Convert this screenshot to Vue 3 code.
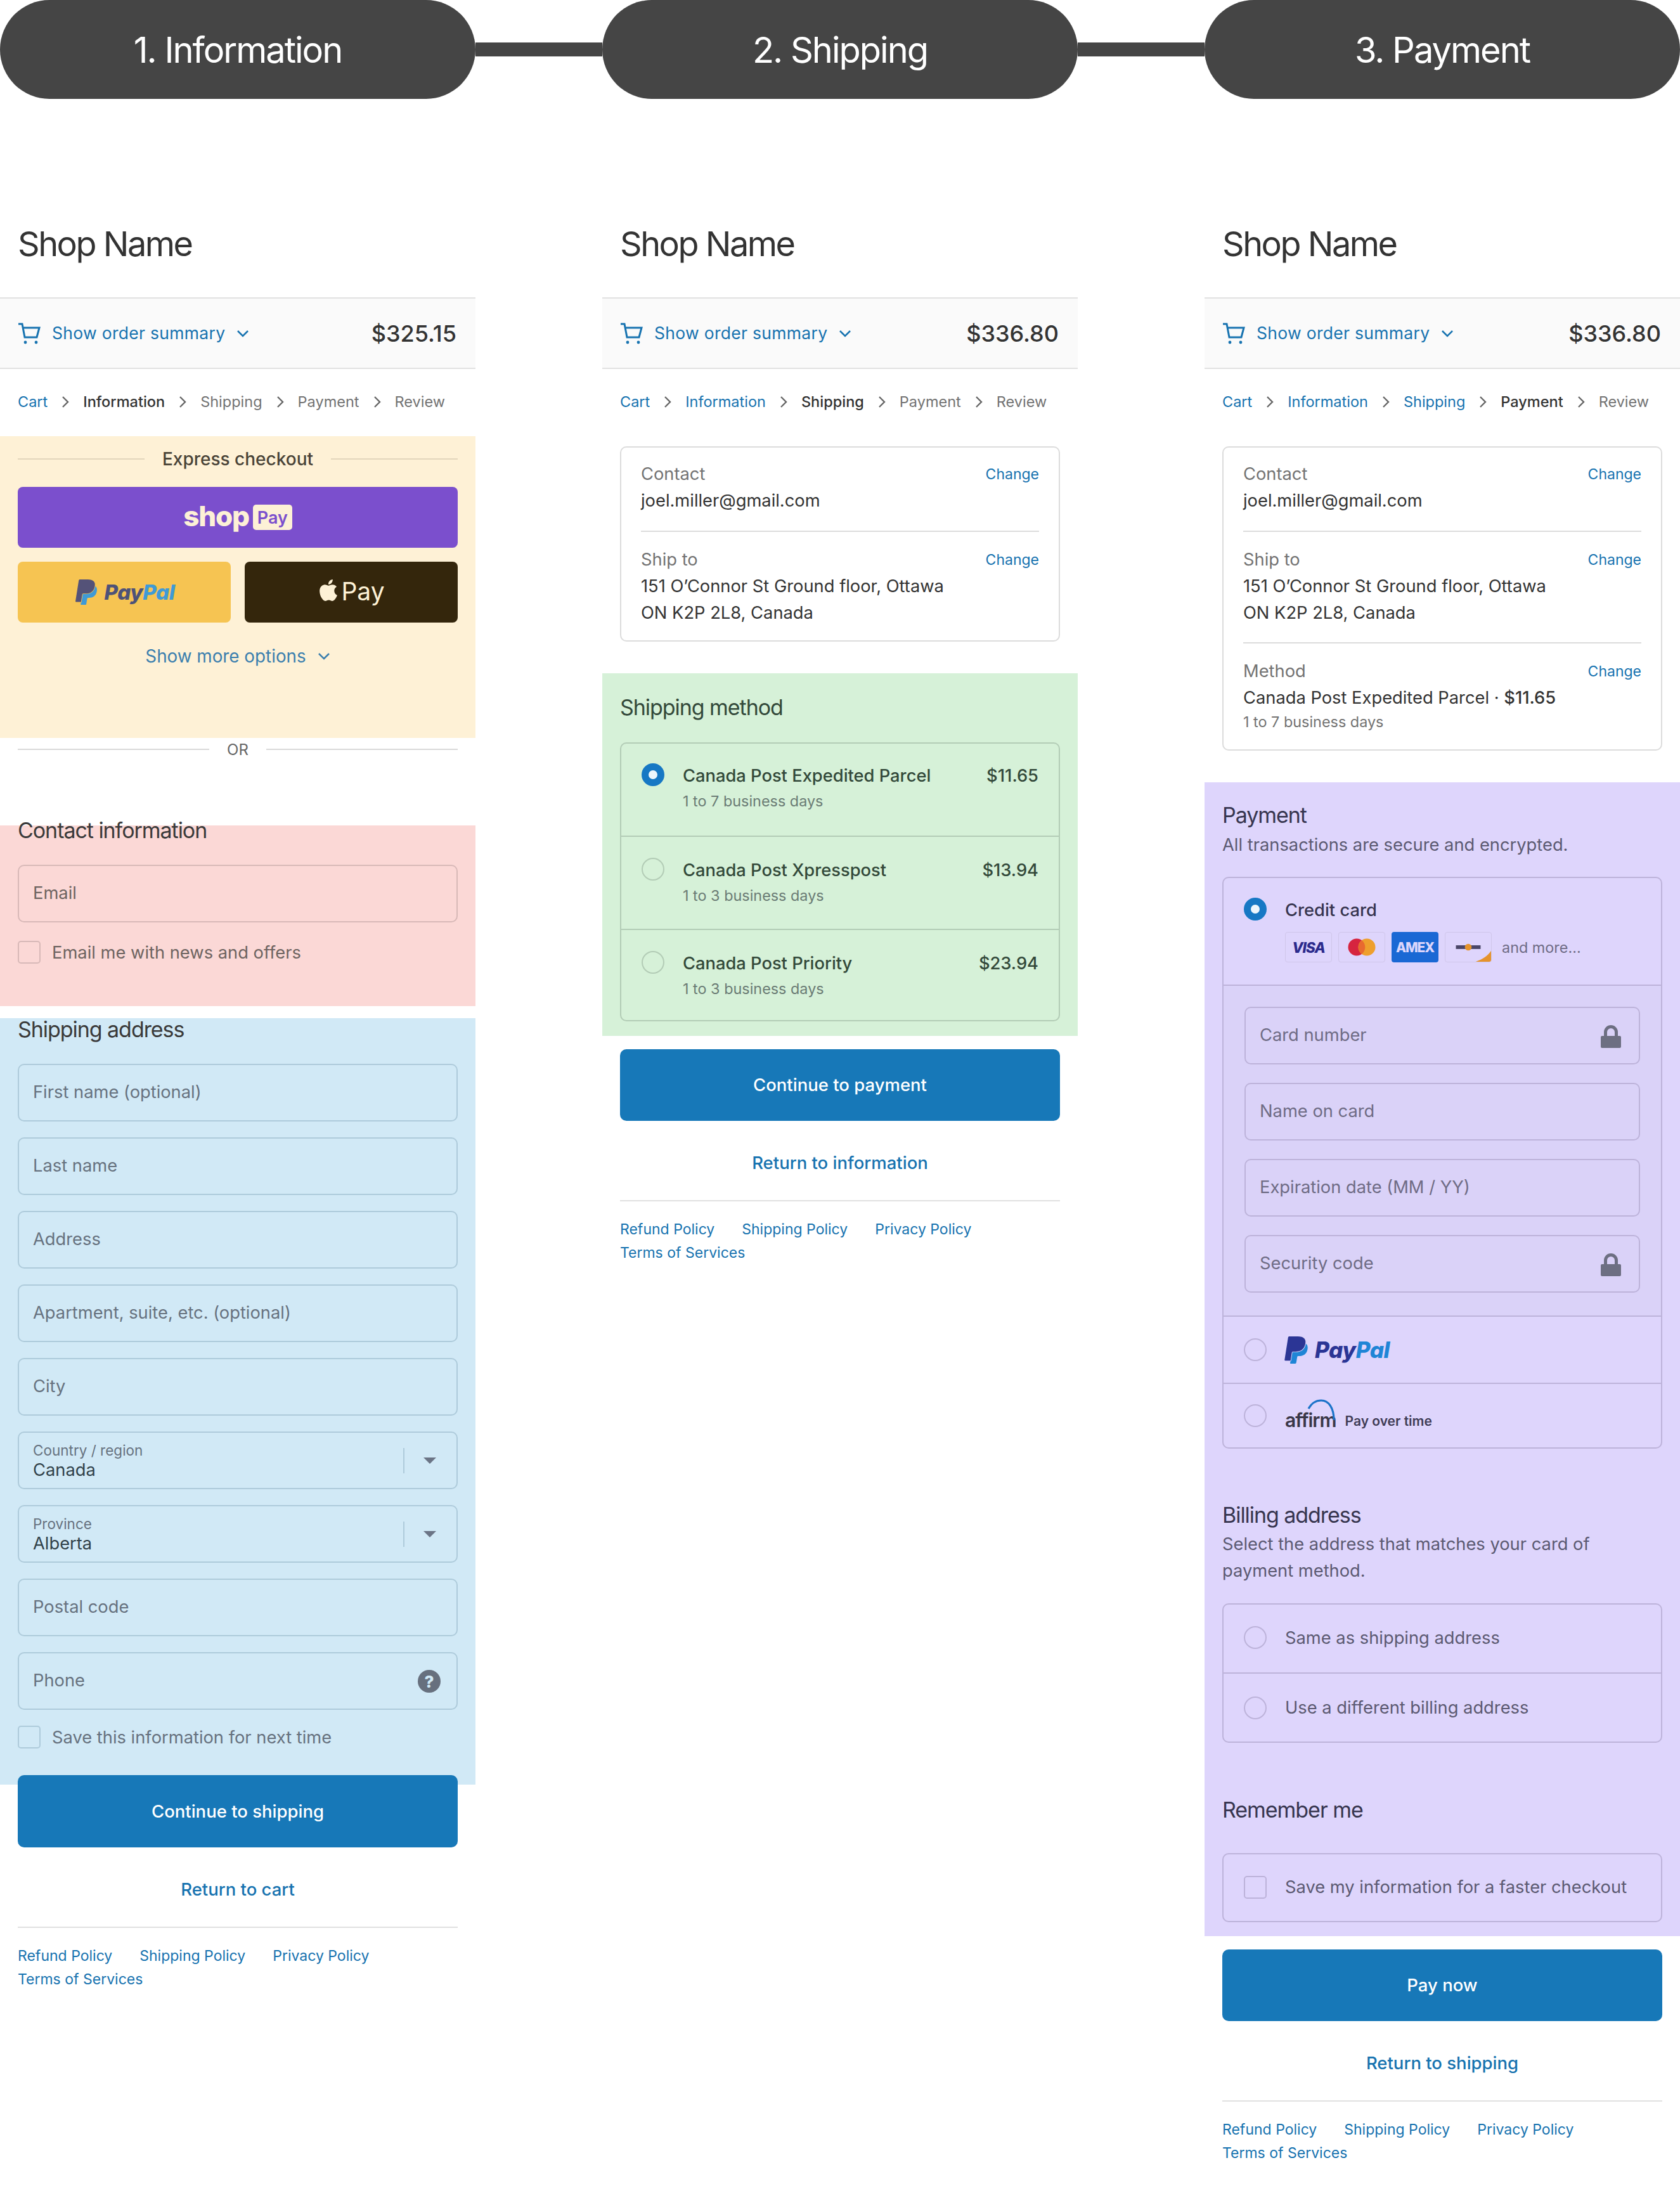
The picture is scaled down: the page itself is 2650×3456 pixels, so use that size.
<template>
  <div class="board">
    <div class="steps">
      <div class="pill">1. Information</div>
      <div class="link"></div>
      <div class="pill">2. Shipping</div>
      <div class="link"></div>
      <div class="pill">3. Payment</div>
    </div>

    <div class="columns">
      <!-- information -->
      <section class="col">
        <h1 class="shop">Shop Name</h1>
        <div class="summary">
          <svg class="cart" viewBox="0 0 36 34" fill="none" stroke="#1773b0" stroke-width="3">
            <path d="M1 2h6l4 21h19l4-15H8" />
            <circle cx="12" cy="31" r="2.4" fill="#1773b0" stroke="none" />
            <circle cx="29" cy="31" r="2.4" fill="#1773b0" stroke="none" />
          </svg>
          <span class="summary-text">Show order summary</span>
          <svg class="chev-down" viewBox="0 0 20 12" fill="none" stroke="#1773b0" stroke-width="2.6"><path d="M2 2l8 8 8-8" /></svg>
          <span class="total">$325.15</span>
        </div>
        <nav class="crumbs">
          <template v-for="(c, i) in crumbs" :key="c">
            <svg v-if="i" class="chev" viewBox="0 0 12 20" fill="none" stroke="#666" stroke-width="2.4"><path d="M2 2l8 8-8 8" /></svg>
            <span :class="crumbClass(i, 1)">{{ c }}</span>
          </template>
        </nav>

        <div class="panel yellow">
          <div class="divider express"><i></i><span>Express checkout</span><i></i></div>
          <div class="btn-shop"><span class="shop-word">shop</span><span class="shop-pay">Pay</span></div>
          <div class="pay-row">
            <div class="btn-paypal">
              <svg class="pp-mark small" viewBox="0 0 24 24">
                <path class="pp-light" d="M21.222 6.917a3.35 3.35 0 0 0-.607-.541c-.013.076-.026.175-.041.254-.93 4.778-4.005 7.201-9.138 7.201h-2.19a.563.563 0 0 0-.556.479l-1.187 7.527h-.506l-.24 1.516a.56.56 0 0 0 .554.647h3.882c.46 0 .85-.334.922-.788.06-.26.76-4.852.816-5.09a.932.932 0 0 1 .923-.788h.58c3.76 0 6.705-1.528 7.565-5.946.36-1.847.174-3.388-.777-4.471z" />
                <path class="pp-dark" d="M7.076 21.337H2.47a.641.641 0 0 1-.633-.74L4.944.901C5.026.382 5.474 0 5.998 0h7.46c2.57 0 4.578.543 5.69 1.81 1.01 1.15 1.304 2.42 1.012 4.287-.023.143-.047.288-.077.437-.983 5.05-4.349 6.797-8.647 6.797h-2.19c-.524 0-.968.382-1.05.9l-1.12 7.106z" />
              </svg>
              <span class="pp-word"><b>Pay</b><em>Pal</em></span>
            </div>
            <div class="btn-apple">
              <svg class="apple" viewBox="0 0 24 24" fill="#fdf1d6"><path d="M12.152 6.896c-.948 0-2.415-1.078-3.96-1.04-2.04.027-3.91 1.183-4.961 3.014-2.117 3.675-.546 9.103 1.519 12.09 1.013 1.454 2.208 3.09 3.792 3.039 1.52-.065 2.09-.987 3.935-.987 1.831 0 2.35.987 3.96.948 1.637-.026 2.676-1.48 3.676-2.948 1.156-1.688 1.636-3.325 1.662-3.415-.039-.013-3.182-1.221-3.22-4.857-.026-3.04 2.48-4.494 2.597-4.559-1.429-2.09-3.623-2.324-4.39-2.376-2-.156-3.675 1.09-4.61 1.09zM15.53 3.83c.843-1.012 1.4-2.427 1.245-3.83-1.207.052-2.662.805-3.532 1.818-.78.896-1.454 2.338-1.273 3.714 1.338.104 2.715-.688 3.559-1.701" /></svg>
              <span class="apple-pay">Pay</span>
            </div>
          </div>
          <div class="more">
            Show more options
            <svg class="chev-down" viewBox="0 0 20 12" fill="none" stroke="#3b7fae" stroke-width="2.6"><path d="M2 2l8 8 8-8" /></svg>
          </div>
        </div>

        <div class="divider or"><i></i><span>OR</span><i></i></div>

        <div class="panel pink">
          <h2 class="title contact-title">Contact information</h2>
          <div class="field"><span class="ph">Email</span></div>
          <label class="check news"><span class="box"></span>Email me with news and offers</label>
        </div>

        <div class="panel blue">
          <h2 class="title addr-title">Shipping address</h2>
          <div class="fields">
            <div v-for="f in addressFields" :key="f.label" class="field" :class="{ select: f.value }">
              <template v-if="f.value">
                <div class="sel-text"><small>{{ f.label }}</small><span>{{ f.value }}</span></div>
                <i class="sel-line"></i>
                <svg class="sel-arrow" viewBox="0 0 20 10"><path d="M0 0h20l-10 10z" fill="#6b7485" /></svg>
              </template>
              <template v-else>
                <span class="ph">{{ f.label }}</span>
                <span v-if="f.help" class="help">?</span>
              </template>
            </div>
          </div>
          <label class="check save"><span class="box"></span>Save this information for next time</label>
        </div>

        <div class="cta over">Continue to shipping</div>
        <div class="back">Return to cart</div>
        <div class="foot"><a v-for="l in policies" :key="l">{{ l }}</a></div>
      </section>

      <!-- shipping -->
      <section class="col">
        <h1 class="shop">Shop Name</h1>
        <div class="summary">
          <svg class="cart" viewBox="0 0 36 34" fill="none" stroke="#1773b0" stroke-width="3">
            <path d="M1 2h6l4 21h19l4-15H8" />
            <circle cx="12" cy="31" r="2.4" fill="#1773b0" stroke="none" />
            <circle cx="29" cy="31" r="2.4" fill="#1773b0" stroke="none" />
          </svg>
          <span class="summary-text">Show order summary</span>
          <svg class="chev-down" viewBox="0 0 20 12" fill="none" stroke="#1773b0" stroke-width="2.6"><path d="M2 2l8 8 8-8" /></svg>
          <span class="total">$336.80</span>
        </div>
        <nav class="crumbs">
          <template v-for="(c, i) in crumbs" :key="c">
            <svg v-if="i" class="chev" viewBox="0 0 12 20" fill="none" stroke="#666" stroke-width="2.4"><path d="M2 2l8 8-8 8" /></svg>
            <span :class="crumbClass(i, 2)">{{ c }}</span>
          </template>
        </nav>

        <div class="review">
          <div v-for="r in reviewShort" :key="r.label" class="review-block">
            <div class="review-head"><span>{{ r.label }}</span><a>Change</a></div>
            <div v-for="line in r.lines" :key="line" class="review-line">{{ line }}</div>
          </div>
        </div>

        <div class="panel green">
          <h2 class="title method-title">Shipping method</h2>
          <div class="ship-box">
            <div v-for="(o, i) in shipOptions" :key="o.name" class="ship-row">
              <span class="radio" :class="{ on: i === 0 }"></span>
              <div class="ship-text"><div class="ship-name">{{ o.name }}</div><div class="ship-days">{{ o.days }}</div></div>
              <span class="ship-price">{{ o.price }}</span>
            </div>
          </div>
        </div>

        <div class="cta green-cta">Continue to payment</div>
        <div class="back">Return to information</div>
        <div class="foot"><a v-for="l in policies" :key="l">{{ l }}</a></div>
      </section>

      <!-- payment -->
      <section class="col">
        <h1 class="shop">Shop Name</h1>
        <div class="summary">
          <svg class="cart" viewBox="0 0 36 34" fill="none" stroke="#1773b0" stroke-width="3">
            <path d="M1 2h6l4 21h19l4-15H8" />
            <circle cx="12" cy="31" r="2.4" fill="#1773b0" stroke="none" />
            <circle cx="29" cy="31" r="2.4" fill="#1773b0" stroke="none" />
          </svg>
          <span class="summary-text">Show order summary</span>
          <svg class="chev-down" viewBox="0 0 20 12" fill="none" stroke="#1773b0" stroke-width="2.6"><path d="M2 2l8 8 8-8" /></svg>
          <span class="total">$336.80</span>
        </div>
        <nav class="crumbs">
          <template v-for="(c, i) in crumbs" :key="c">
            <svg v-if="i" class="chev" viewBox="0 0 12 20" fill="none" stroke="#666" stroke-width="2.4"><path d="M2 2l8 8-8 8" /></svg>
            <span :class="crumbClass(i, 3)">{{ c }}</span>
          </template>
        </nav>

        <div class="review">
          <div v-for="r in reviewShort" :key="r.label" class="review-block">
            <div class="review-head"><span>{{ r.label }}</span><a>Change</a></div>
            <div v-for="line in r.lines" :key="line" class="review-line">{{ line }}</div>
          </div>
          <div class="review-block">
            <div class="review-head"><span>Method</span><a>Change</a></div>
            <div class="review-line">Canada Post Expedited Parcel · <b class="med">$11.65</b></div>
            <div class="review-sub">1 to 7 business days</div>
          </div>
        </div>

        <div class="panel purple">
          <h2 class="title pay-title">Payment</h2>
          <p class="lead one">All transactions are secure and encrypted.</p>

          <div class="pay-box">
            <div class="card-head">
              <span class="radio on"></span>
              <div>
                <div class="card-title">Credit card</div>
                <div class="tiles">
                  <span class="tile visa">VISA</span>
                  <span class="tile">
                    <svg class="mc" viewBox="0 0 44 28"><circle cx="14" cy="14" r="13.5" fill="#d6243f" /><circle cx="30" cy="14" r="13.5" fill="#ee9f2d" /><path d="M22 3a14 14 0 0 1 0 22 14 14 0 0 1 0-22z" fill="#e86a2f" /></svg>
                  </span>
                  <span class="tile amex">AMEX</span>
                  <span class="tile disc">
                    <svg viewBox="0 0 74 48" class="disc-art"><rect x="17" y="21" width="40" height="6" fill="#4a4668" /><circle cx="37" cy="24" r="5.5" fill="#e5932c" /><path d="M74 48H48c12-4 21-10 26-18z" fill="#e5932c" /></svg>
                  </span>
                  <span class="and-more">and more...</span>
                </div>
              </div>
            </div>
            <div class="card-form">
              <div v-for="c in cardFields" :key="c.label" class="field">
                <span class="ph">{{ c.label }}</span>
                <svg v-if="c.lock" class="lock" viewBox="0 0 32 36"><path d="M5 19V11a11 11 0 0 1 22 0v8h-5V11a6 6 0 0 0-12 0v8z" fill="#6d6f82" /><rect y="17" width="32" height="19" rx="2" fill="#6d6f82" /></svg>
              </div>
            </div>
            <div class="method-row pp-row">
              <span class="radio"></span>
              <svg class="pp-mark" viewBox="0 0 24 24">
                <path class="pp-sky" d="M21.222 6.917a3.35 3.35 0 0 0-.607-.541c-.013.076-.026.175-.041.254-.93 4.778-4.005 7.201-9.138 7.201h-2.19a.563.563 0 0 0-.556.479l-1.187 7.527h-.506l-.24 1.516a.56.56 0 0 0 .554.647h3.882c.46 0 .85-.334.922-.788.06-.26.76-4.852.816-5.09a.932.932 0 0 1 .923-.788h.58c3.76 0 6.705-1.528 7.565-5.946.36-1.847.174-3.388-.777-4.471z" />
                <path class="pp-navy" d="M7.076 21.337H2.47a.641.641 0 0 1-.633-.74L4.944.901C5.026.382 5.474 0 5.998 0h7.46c2.57 0 4.578.543 5.69 1.81 1.01 1.15 1.304 2.42 1.012 4.287-.023.143-.047.288-.077.437-.983 5.05-4.349 6.797-8.647 6.797h-2.19c-.524 0-.968.382-1.05.9l-1.12 7.106z" />
              </svg>
              <span class="pp-word large"><b>Pay</b><em>Pal</em></span>
            </div>
            <div class="method-row affirm-row">
              <span class="radio"></span>
              <span class="affirm">
                affirm
                <svg class="affirm-arc" viewBox="0 0 46 34" fill="none" stroke="#1a73c9" stroke-width="3.2"><path d="M2 15C7 6 14 2 22 2c12 0 20 12 20 31" /></svg>
              </span>
              <span class="over-time">Pay over time</span>
            </div>
          </div>

          <h2 class="title bill-title">Billing address</h2>
          <p class="lead two">Select the address that matches your card of payment method.</p>
          <div class="bill-box">
            <div class="bill-row"><span class="radio"></span>Same as shipping address</div>
            <div class="bill-row"><span class="radio"></span>Use a different billing address</div>
          </div>

          <h2 class="title remember-title">Remember me</h2>
          <div class="remember-box"><span class="box"></span>Save my information for a faster checkout</div>
        </div>

        <div class="cta green-cta">Pay now</div>
        <div class="back">Return to shipping</div>
        <div class="foot"><a v-for="l in policies" :key="l">{{ l }}</a></div>
      </section>
    </div>
  </div>
</template>

<script setup>
const crumbs = ['Cart', 'Information', 'Shipping', 'Payment', 'Review']
const policies = ['Refund Policy', 'Shipping Policy', 'Privacy Policy', 'Terms of Services']

const addressFields = [
  { label: 'First name (optional)' },
  { label: 'Last name' },
  { label: 'Address' },
  { label: 'Apartment, suite, etc. (optional)' },
  { label: 'City' },
  { label: 'Country / region', value: 'Canada' },
  { label: 'Province', value: 'Alberta' },
  { label: 'Postal code' },
  { label: 'Phone', help: true },
]

const reviewShort = [
  { label: 'Contact', lines: ['joel.miller@gmail.com'] },
  { label: 'Ship to', lines: ['151 O’Connor St Ground floor, Ottawa', 'ON K2P 2L8, Canada'] },
]

const shipOptions = [
  { name: 'Canada Post Expedited Parcel', days: '1 to 7 business days', price: '$11.65' },
  { name: 'Canada Post Xpresspost', days: '1 to 3 business days', price: '$13.94' },
  { name: 'Canada Post Priority', days: '1 to 3 business days', price: '$23.94' },
]

const cardFields = [
  { label: 'Card number', lock: true },
  { label: 'Name on card' },
  { label: 'Expiration date (MM / YY)' },
  { label: 'Security code', lock: true },
]

// index of the current step per column
function crumbClass(i, current) {
  if (i === current) return 'crumb now'
  return i < current ? 'crumb done' : 'crumb todo'
}
</script>

<style>
body {
  background: #fff;
}
</style>

<style scoped>
.board {
  width: 2650px;
  height: 3456px;
  overflow: hidden;
  font-family: Inter, "Liberation Sans", sans-serif;
  font-size: 27.3px;
  color: #333;
  background: #fff;
}

.steps {
  display: flex;
  align-items: center;
  height: 156px;
}

.pill {
  width: 750px;
  height: 156px;
  box-sizing: border-box;
  padding-top: 2px;
  border-radius: 78px;
  background: #454545;
  color: #fff;
  font-size: 56px;
  letter-spacing: -2px;
  display: flex;
  align-items: center;
  justify-content: center;
}

.link {
  width: 200px;
  height: 22px;
  background: #454545;
}

.columns {
  display: flex;
  gap: 200px;
}

.col {
  width: 750px;
}

.shop {
  margin: 194px 0 49px 28px;
  font-size: 54px;
  font-weight: 400;
  line-height: 70px;
  letter-spacing: -2.5px;
  color: #333;
}

.summary {
  height: 113px;
  box-sizing: border-box;
  border-top: 2px solid #e1e1e1;
  border-bottom: 2px solid #e1e1e1;
  background: #fafafa;
  padding: 0 30px 0 28px;
  display: flex;
  align-items: center;
  color: #1773b0;
}

.cart {
  width: 36px;
  height: 34px;
  margin-right: 18px;
}

.summary-text {
  font-size: 26.5px;
  letter-spacing: 0.3px;
  margin-top: -2px;
}

.chev-down {
  width: 20px;
  height: 12px;
  margin-left: 18px;
}

.total {
  margin-left: auto;
  font-size: 36px;
  font-weight: 500;
  color: #333;
}

.crumbs {
  height: 106px;
  box-sizing: border-box;
  padding: 0 0 3px 28px;
  display: flex;
  align-items: center;
  font-size: 23.5px;
}

.chev {
  width: 12px;
  height: 20px;
  margin: 0 22px;
}

.crumb.done {
  color: #1773b0;
}

.crumb.now {
  color: #333;
  font-weight: 500;
}

.crumb.todo {
  color: #737373;
}

.panel {
  display: flow-root;
  padding: 0 28px;
  box-sizing: border-box;
}

.yellow {
  height: 476px;
  background: #fef1d6;
}

.divider {
  display: flex;
  align-items: center;
}

.divider i {
  flex: 1;
  height: 2px;
  background: #e3d6bc;
}

.express {
  height: 72px;
  margin-bottom: 8px;
  gap: 28px;
  font-size: 28px;
  font-weight: 500;
  color: #4a4438;
}

.btn-shop {
  height: 96px;
  border-radius: 8px;
  background: #7b4fcd;
  display: flex;
  align-items: center;
  justify-content: center;
  gap: 6px;
}

.shop-word {
  font-size: 44px;
  font-weight: 800;
  letter-spacing: -1.2px;
  color: #fdf1d6;
  line-height: 46px;
  margin-top: -4px;
}

.shop-pay {
  background: #fdf1d6;
  color: #7b4fcd;
  font-size: 27px;
  font-weight: 600;
  border-radius: 5px;
  width: 62px;
  height: 40px;
  display: flex;
  align-items: center;
  justify-content: center;
}

.pay-row {
  display: flex;
  gap: 22px;
  margin-top: 22px;
}

.btn-paypal,
.btn-apple {
  flex: 1;
  height: 96px;
  border-radius: 8px;
  display: flex;
  align-items: center;
  justify-content: center;
}

.btn-paypal {
  background: #f6c452;
  gap: 8px;
}

.btn-apple {
  background: #34260c;
  color: #fdf1d6;
  font-size: 39px;
  gap: 3px;
}

.apple-pay {
  margin-top: -3px;
}

.apple {
  width: 34px;
  height: 34px;
  margin-top: -6px;
}

.pp-mark {
  width: 43px;
  height: 43px;
}

.pp-mark.small {
  width: 40px;
  height: 40px;
}

.pp-dark {
  fill: #545278;
}

.pp-light {
  fill: #3f9ad6;
}

.pp-navy {
  fill: #2b3595;
}

.pp-sky {
  fill: #1f85d6;
}

.pp-word {
  font-size: 33px;
  font-weight: 800;
  font-style: italic;
  letter-spacing: -0.4px;
}

.pp-word b {
  font-weight: 800;
  color: #4e5278;
}

.pp-word em {
  color: #3f9ad6;
}

.pp-word.large {
  font-size: 35px;
}

.pp-word.large b {
  color: #2b3595;
}

.pp-word.large em {
  color: #1f85d6;
}

.more {
  margin-top: 32px;
  height: 42px;
  display: flex;
  align-items: center;
  justify-content: center;
  font-size: 27.8px;
  color: #3b7fae;
}

.or {
  height: 36px;
  gap: 28px;
  padding: 0 28px;
  font-size: 24px;
  color: #666;
}

.or i {
  background: #d9d9d9;
}

.pink {
  margin-top: 102px;
  height: 285px;
  background: #fbd8d6;
  --line: #d8b9b8;
  --ph: #6e6461;
}

.blue {
  margin-top: 19px;
  height: 1209px;
  background: #d1e9f6;
  --line: #aecbdb;
  --ph: #67727f;
}

.title {
  margin: 0;
  font-size: 34px;
  font-weight: 400;
  line-height: 50px;
  letter-spacing: -1.05px;
  color: #3a3a3a;
}

.contact-title {
  margin: -17px 0 29px;
}

.addr-title {
  margin: -7px 0 29px;
}

.field {
  height: 91px;
  box-sizing: border-box;
  border: 2px solid var(--line, #c9c9c9);
  border-radius: 10px;
  padding: 0 22px 3px 22px;
  display: flex;
  align-items: center;
  justify-content: space-between;
}

.ph {
  color: var(--ph, #737373);
}

.fields {
  display: flex;
  flex-direction: column;
  gap: 25px;
}

.check {
  display: flex;
  align-items: center;
  gap: 18px;
  color: var(--ph, #737373);
}

.box {
  width: 36px;
  height: 36px;
  flex: none;
  box-sizing: border-box;
  border: 2px solid var(--line, #c9c9c9);
  border-radius: 5px;
}

.news {
  margin-top: 29px;
}

.save {
  margin-top: 25px;
}

.select {
  padding-bottom: 0;
}

.sel-text {
  flex: 1;
  display: flex;
  flex-direction: column;
}

.sel-text small {
  font-size: 22.5px;
  line-height: 30px;
  color: var(--ph);
}

.sel-text span {
  line-height: 32px;
  color: #31424a;
}

.sel-line {
  width: 2px;
  height: 40px;
  background: var(--line);
}

.sel-arrow {
  width: 20px;
  height: 10px;
  margin: 0 10px 0 30px;
}

.help {
  width: 36px;
  height: 36px;
  border-radius: 50%;
  background: #67707e;
  color: #d1e9f6;
  font-size: 26px;
  font-weight: 800;
  display: flex;
  align-items: center;
  justify-content: center;
  margin-right: 3px;
  margin-top: 4px;
}

.cta {
  height: 114px;
  box-sizing: border-box;
  margin: 0 28px;
  border-radius: 10px;
  background: #1778b8;
  color: #fff;
  font-size: 27.5px;
  font-weight: 500;
  display: flex;
  align-items: center;
  justify-content: center;
}

.over {
  margin-top: -15px;
  position: relative;
}

.green-cta {
  margin-top: 21px;
  height: 113px;
  padding-bottom: 2px;
}

.back {
  margin: 46px 28px 0;
  padding-bottom: 39px;
  border-bottom: 2px solid #e1e1e1;
  font-size: 27.5px;
  line-height: 40px;
  text-align: center;
  font-weight: 500;
  color: #1773b0;
}

.foot {
  margin: 26px 28px 0;
  display: flex;
  flex-wrap: wrap;
  gap: 0 43px;
  font-size: 23px;
  line-height: 37px;
  color: #1773b0;
}

.review {
  margin: 16px 28px 0;
  border: 2px solid #dcdcdc;
  border-radius: 10px;
  padding: 0 31px;
}

.review-block {
  padding: 21px 0 26px;
}

.review-block + .review-block {
  border-top: 2px solid #dcdcdc;
  padding-top: 23px;
  padding-bottom: 25px;
}

.review-block:last-child {
  padding-bottom: 22px;
}

.review-head {
  display: flex;
  justify-content: space-between;
  align-items: center;
  line-height: 42px;
  color: #737373;
}

.review-head a {
  font-size: 23px;
  color: #1773b0;
}

.review-line {
  line-height: 42px;
}

.med {
  font-weight: 500;
}

.review-sub {
  font-size: 23.4px;
  line-height: 34px;
  margin-bottom: 4px;
  color: #737373;
}

.green {
  margin-top: 50px;
  height: 572px;
  padding-top: 34px;
  background: #d6f1d8;
  --line: #b3ccb6;
}

.method-title {
  line-height: 40px;
  margin-bottom: 35px;
  color: #33493a;
}

.ship-box {
  height: 440px;
  box-sizing: border-box;
  border: 2px solid var(--line);
  border-radius: 10px;
  display: flex;
  flex-direction: column;
}

.ship-row {
  height: 145px;
  box-sizing: border-box;
  padding: 31px 32px 0;
  display: flex;
  gap: 29px;
}

.ship-row + .ship-row {
  height: 147px;
  padding-top: 33px;
  border-top: 2px solid var(--line);
}

.ship-row:last-child {
  height: 144px;
}

.radio {
  width: 36px;
  height: 36px;
  flex: none;
  box-sizing: border-box;
  border: 2px solid var(--line);
  border-radius: 50%;
}

.radio.on {
  border: 11.5px solid #1778c4;
  background: #eef6fc;
}

.ship-text {
  flex: 1;
}

.ship-name {
  line-height: 40px;
  font-weight: 500;
  color: #33493a;
}

.ship-days {
  font-size: 23.4px;
  line-height: 40px;
  color: #6b7c75;
}

.ship-price {
  line-height: 40px;
  font-weight: 500;
  color: #33493a;
}

.purple {
  margin-top: 50px;
  height: 1820px;
  padding-top: 32px;
  background: #ded5fc;
  --line: #bdb3da;
  --ph: #6f6c85;
  color: #37354f;
}

.purple .title {
  line-height: 40px;
  color: #37354f;
}

.lead {
  margin: 0;
  color: #5c5a72;
}

.lead.one {
  margin-top: 7px;
  line-height: 40px;
}

.lead.two {
  margin-top: 5px;
  line-height: 42px;
  max-width: 640px;
}

.pay-box {
  margin-top: 30px;
  border: 2px solid var(--line);
  border-radius: 10px;
  overflow: hidden;
}

.card-head {
  height: 168px;
  box-sizing: border-box;
  padding: 31px 0 0 32px;
  display: flex;
  gap: 29px;
}

.card-title {
  line-height: 40px;
  font-weight: 500;
}

.tiles {
  margin-top: 14px;
  display: flex;
  align-items: center;
  gap: 10px;
}

.tile {
  width: 74px;
  height: 48px;
  box-sizing: border-box;
  border: 1px solid #cfc6ea;
  border-radius: 4px;
  display: flex;
  align-items: center;
  justify-content: center;
  overflow: hidden;
}

.visa {
  font-size: 22.5px;
  font-weight: 800;
  font-style: italic;
  letter-spacing: -1px;
  color: #2b2a8c;
}

.mc {
  width: 44px;
  height: 28px;
}

.amex {
  border: none;
  background: #1a68d4;
  color: #dcd6fb;
  font-size: 21px;
  font-weight: 800;
  letter-spacing: -1.2px;
}

.disc-art {
  width: 74px;
  height: 48px;
}

.and-more {
  margin-left: 6px;
  font-size: 23.4px;
  color: #6f6c85;
}

.card-form {
  border-top: 2px solid var(--line);
  border-bottom: 2px solid var(--line);
  background: #dad2f8;
  padding: 33px 33px 36px;
  display: flex;
  flex-direction: column;
  gap: 29px;
}

.lock {
  width: 32px;
  height: 36px;
  margin: 6px 6px 0 0;
}

.method-row {
  display: flex;
  align-items: center;
  padding-left: 32px;
}

.pp-row {
  height: 104px;
  border-bottom: 2px solid var(--line);
}

.pp-row .pp-mark {
  margin: 0 8px 0 25px;
}

.affirm-row {
  height: 100px;
}

.affirm {
  position: relative;
  margin-left: 29px;
  font-size: 30px;
  font-weight: 600;
  letter-spacing: -1px;
  line-height: 36px;
  margin-top: 14px;
  color: #3a3748;
}

.affirm-arc {
  position: absolute;
  left: 35px;
  top: -15px;
  width: 46px;
  height: 34px;
}

.over-time {
  margin-left: 14px;
  margin-top: 16px;
  font-size: 21px;
  font-weight: 600;
  color: #3f3c56;
}

.bill-title {
  margin-top: 85px;
}

.bill-box {
  margin-top: 30px;
  border: 2px solid var(--line);
  border-radius: 10px;
}

.bill-row {
  height: 107px;
  padding-left: 32px;
  display: flex;
  align-items: center;
  gap: 29px;
  color: #5c5a72;
}

.bill-row:first-child {
  height: 104px;
  padding-bottom: 3px;
}

.bill-row + .bill-row {
  border-top: 2px solid var(--line);
}

.remember-title {
  margin-top: 86px;
}

.remember-box {
  margin-top: 48px;
  height: 109px;
  box-sizing: border-box;
  border: 2px solid var(--line);
  border-radius: 10px;
  padding: 0 0 2px 32px;
  display: flex;
  align-items: center;
  gap: 29px;
  color: #5c5a72;
}
</style>
